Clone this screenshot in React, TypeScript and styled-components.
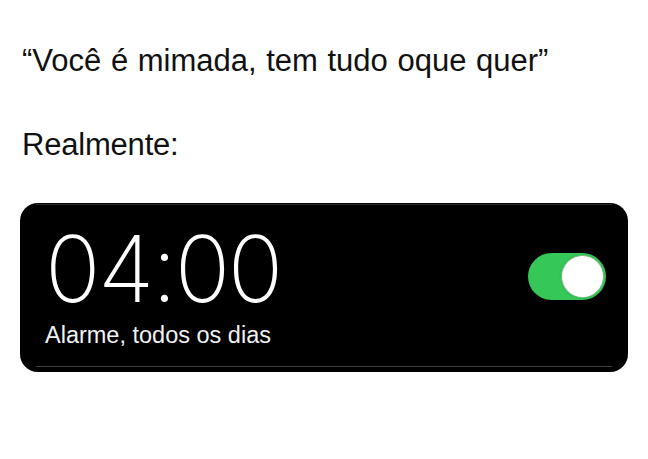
import React from "react";
import styled, { createGlobalStyle } from "styled-components";

const Global = createGlobalStyle`
  html, body { margin: 0; padding: 0; background: #ffffff; }
  body { font-family: "Liberation Sans", Arial, sans-serif; }
`;

const Page = styled.div`
  width: 648px;
  height: 459px;
  box-sizing: border-box;
  padding: 43px 20px 0 20px;
  display: flex;
  flex-direction: column;
`;

const Caption = styled.p<{ $gap: number; $spacing: number }>`
  margin: 0 0 ${(p) => p.$gap}px 2px;
  font-family: "Liberation Sans", Arial, sans-serif;
  font-size: 31px;
  line-height: 36px;
  color: #111111;
  letter-spacing: ${(p) => p.$spacing}px;
  word-spacing: 1px;
`;

const Card = styled.div`
  width: 608px;
  height: 169px;
  box-sizing: border-box;
  background: #000000;
  border-radius: 18px;
  padding: 1px 16px 5px 16px;
  display: flex;
`;

const Inner = styled.div`
  flex: 1;
  border-top: 1px solid #2e2e2e;
  border-bottom: 1px solid #3c3c3c;
  display: grid;
  grid-template-columns: 1fr auto;
  padding: 0 6px 0 9px;
`;

const Info = styled.div`
  display: flex;
  flex-direction: column;
  padding-top: 18px;
`;

const Time = styled.div`
  font-family: Inter, "Liberation Sans", sans-serif;
  font-weight: 250;
  font-size: 92px;
  line-height: 92px;
  color: #ffffff;
  letter-spacing: -2.5px;
`;

const Label = styled.div`
  margin-top: 7px;
  font-family: "Liberation Sans", Arial, sans-serif;
  font-size: 23.5px;
  line-height: 26px;
  color: #f2f2f2;
`;

const Toggle = styled.div`
  margin-top: 48px;
  width: 78px;
  height: 47px;
  border-radius: 24px;
  background: #35c758;
  display: flex;
  align-items: center;
  justify-content: flex-end;
  padding: 0 3px;
  box-sizing: border-box;
`;

const Knob = styled.div`
  width: 41px;
  height: 41px;
  border-radius: 50%;
  background: #ffffff;
  box-shadow: 0 0 0 1px #7fbf8a, 0 0 3px rgba(0, 0, 0, 0.35);
`;

export default function App() {
  return (
    <>
      <Global />
      <Page>
        <Caption $gap={48} $spacing={0}>“Você é mimada, tem tudo oque quer”</Caption>
        <Caption $gap={40} $spacing={-0.2}>Realmente:</Caption>
        <Card>
          <Inner>
            <Info>
              <Time>04:00</Time>
              <Label>Alarme, todos os dias</Label>
            </Info>
            <Toggle>
              <Knob />
            </Toggle>
          </Inner>
        </Card>
      </Page>
    </>
  );
}
